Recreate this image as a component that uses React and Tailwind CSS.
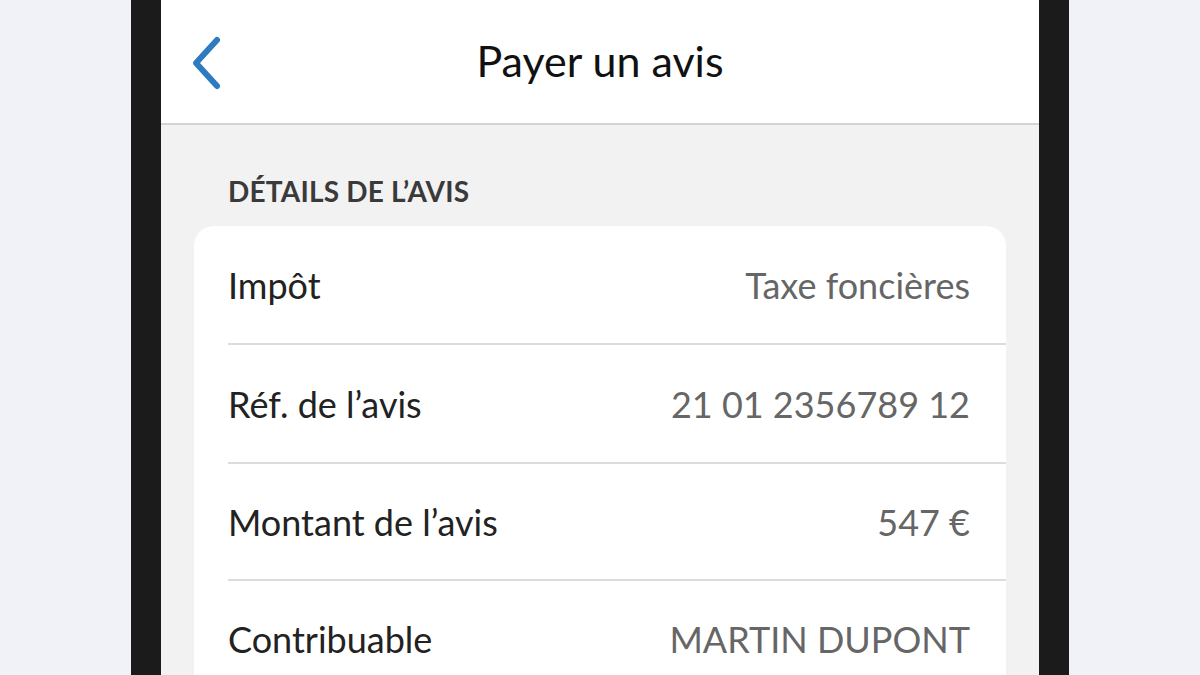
export default function App() {
    const rows = [
        ['Impôt', 'Taxe foncières', 'h-[119px]'],
        ['Réf. de l’avis', '21 01 2356789 12', 'h-[119px]'],
        ['Montant de l’avis', '547 €', 'h-[117px]'],
        ['Contribuable', 'MARTIN DUPONT', 'h-[118px]'],
    ]

    return (
        <div className="h-[675px] w-full overflow-hidden bg-[#f1f2f7] flex justify-center font-['Lato',sans-serif]">
            {/* Phone frame */}
            <div className="w-[938px] h-full bg-[#1b1b1b] px-[30px]">
                <div className="h-full bg-[#f2f2f2]">
                    {/* Header */}
                    <header className="relative h-[125px] bg-white border-b-2 border-[#d3d3d3] flex items-center justify-center">
                        <svg
                            className="absolute left-[30px] top-[35px]"
                            width="34"
                            height="56"
                            viewBox="0 0 34 56"
                            fill="none"
                        >
                            <path
                                d="M26 5 L5 28 L26 51"
                                stroke="#2f7bbf"
                                strokeWidth="6"
                                strokeLinecap="round"
                                strokeLinejoin="round"
                            />
                        </svg>
                        <h1 className="text-[43px] text-[#111] leading-none pb-[2px]">Payer un avis</h1>
                    </header>

                    {/* Section */}
                    <h2 className="pt-[52px] pb-[21px] pl-[67px] text-[28px] font-bold text-[#3a3a3a] leading-none tracking-[0.2px]">
                        DÉTAILS DE L’AVIS
                    </h2>

                    <div className="mx-[33px] rounded-[20px] bg-white pl-[34px]">
                        {rows.map(([label, value, h]) => (
                            <div
                                key={label}
                                className={`${h} flex items-center justify-between pr-[36px] border-b-2 border-[#dcdcdc]`}
                            >
                                <span className="text-[36px] text-[#222]">{label}</span>
                                <span className="text-[36px] text-[#666]">{value}</span>
                            </div>
                        ))}
                    </div>
                </div>
            </div>
        </div>
    )
}
